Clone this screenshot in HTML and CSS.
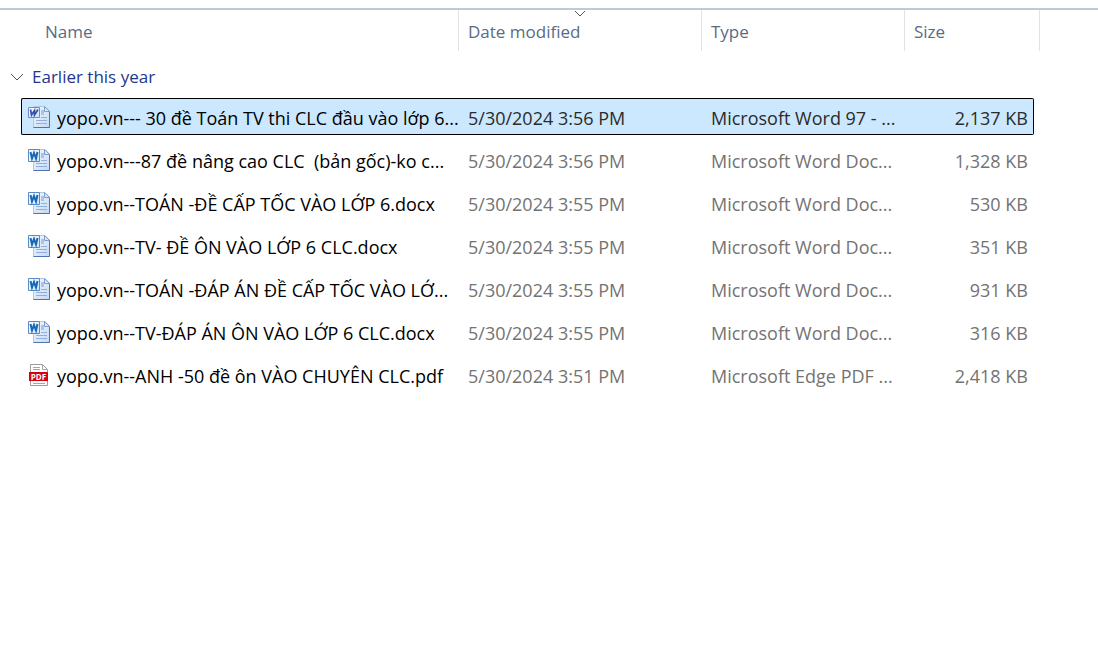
FILE: index.html
```html
<!DOCTYPE html>
<html lang="en">
<head>
<meta charset="utf-8">
<title>Files</title>
<link rel="stylesheet" href="styles.css">
</head>
<body>
<svg class="defs" aria-hidden="true">
  <defs>
    <linearGradient id="page" x1="0" y1="0" x2="1" y2="1"><stop offset="0" stop-color="#f4f9ff"/><stop offset="1" stop-color="#c3d8f4"/></linearGradient>
    <linearGradient id="badge" x1="0" y1="0" x2="1" y2="1"><stop offset="0" stop-color="#fff"/><stop offset="1" stop-color="#c9e2fa"/></linearGradient>
    <symbol id="sheet" viewBox="0 0 24 24">
      <path d="M6.500 1.500H18L22.500 6V22.500H6.500Z" fill="url(#page)" stroke="#b4c8e2"/>
      <path d="M22.500 6V22.500H6.500" fill="none" stroke="#4f74ad"/>
      <path d="M17.500 1.500V6.500H22.500Z" fill="#dce9f8" stroke="#809fca"/>
      <path d="M14 5H17V10H14Z" fill="#a9c4e6"/>
      <path d="M14 12.500H20M9 15.500H20M9 18.500H20" stroke="#91afda"/>
    </symbol>
    <symbol id="docx" viewBox="0 0 24 24">
      <use href="#sheet"/>
      <path d="M1.500 1.500H12.500V13.500H1.500Z" fill="url(#badge)" stroke="#5b8bc4"/>
      <path d="M3.500 4L5 10.500L7 5L9 10.500L10.500 4" fill="none" stroke="#1767b8" stroke-width="2"/>
    </symbol>
    <symbol id="doc" viewBox="0 0 24 24">
      <use href="#sheet"/>
      <path d="M1.500 2.500H12.500V12.500H1.500Z" fill="url(#badge)" stroke="#7188d0"/>
      <path d="M3.500 4.500L4.500 10L7.500 5.500L7.500 10L11 4.500" fill="none" stroke="#334fae" stroke-width="1.700"/>
    </symbol>
    <symbol id="pdf" viewBox="0 0 24 24">
      <path d="M3.500 1.500H15.500L20.500 6.500V22.500H3.500Z" fill="#fff" stroke="#9b9b9b"/>
      <path d="M15.500 1.500V6.500H20.500M6 4.500H13M6 6.500H13M6 20.500H18" fill="none" stroke="#a6a6a6"/>
      <path d="M2 9H21V18H2Z" fill="#d9000d"/>
      <text x="11.500" y="16.500" class="pdf-text">PDF</text>
    </symbol>
  </defs>
</svg>
<main class="view">
  <table class="files">
    <colgroup><col class="c-gutter"><col><col class="c-date"><col class="c-type"><col class="c-size"><col class="c-end"></colgroup>
    <thead>
      <tr>
        <th colspan="2" scope="col"><button class="sort sort-name">Name</button></th>
        <th scope="col"><button class="sort">Date modified<svg class="arrow" viewBox="0 0 12 7"><path d="M1 1L6 6L11 1"/></svg></button></th>
        <th scope="col"><button class="sort">Type</button></th>
        <th colspan="2" scope="col"><button class="sort">Size</button></th>
      </tr>
    </thead>
    <tbody>
      <tr><td colspan="6"><button class="group"><svg class="chevron" viewBox="0 0 14 8"><path d="M1 1L7 7L13 1"/></svg>Earlier this year</button></td></tr>
      <tr class="selected"><td></td><td><div class="cell name"><svg class="icon"><use href="#doc"/></svg>yopo.vn--- 30 đề Toán TV thi CLC đầu vào lớp 6...</div></td><td><div class="cell">5/30/2024 3:56 PM</div></td><td><div class="cell">Microsoft Word 97 - ...</div></td><td><div class="cell size">2,137 KB</div></td><td></td></tr>
      <tr><td></td><td><div class="cell name"><svg class="icon"><use href="#docx"/></svg>yopo.vn---87 đề nâng cao CLC&nbsp; (bản gốc)-ko c...</div></td><td><div class="cell">5/30/2024 3:56 PM</div></td><td><div class="cell">Microsoft Word Doc...</div></td><td><div class="cell size">1,328 KB</div></td><td></td></tr>
      <tr><td></td><td><div class="cell name"><svg class="icon"><use href="#docx"/></svg>yopo.vn--TOÁN -ĐỀ CẤP TỐC VÀO LỚP 6.docx</div></td><td><div class="cell">5/30/2024 3:55 PM</div></td><td><div class="cell">Microsoft Word Doc...</div></td><td><div class="cell size">530 KB</div></td><td></td></tr>
      <tr><td></td><td><div class="cell name"><svg class="icon"><use href="#docx"/></svg>yopo.vn--TV- ĐỀ ÔN VÀO LỚP 6 CLC.docx</div></td><td><div class="cell">5/30/2024 3:55 PM</div></td><td><div class="cell">Microsoft Word Doc...</div></td><td><div class="cell size">351 KB</div></td><td></td></tr>
      <tr><td></td><td><div class="cell name"><svg class="icon"><use href="#docx"/></svg>yopo.vn--TOÁN -ĐÁP ÁN ĐỀ CẤP TỐC VÀO LỚ...</div></td><td><div class="cell">5/30/2024 3:55 PM</div></td><td><div class="cell">Microsoft Word Doc...</div></td><td><div class="cell size">931 KB</div></td><td></td></tr>
      <tr><td></td><td><div class="cell name"><svg class="icon"><use href="#docx"/></svg>yopo.vn--TV-ĐÁP ÁN ÔN VÀO LỚP 6 CLC.docx</div></td><td><div class="cell">5/30/2024 3:55 PM</div></td><td><div class="cell">Microsoft Word Doc...</div></td><td><div class="cell size">316 KB</div></td><td></td></tr>
      <tr><td></td><td><div class="cell name"><svg class="icon"><use href="#pdf"/></svg>yopo.vn--ANH -50 đề ôn VÀO CHUYÊN CLC.pdf</div></td><td><div class="cell">5/30/2024 3:51 PM</div></td><td><div class="cell">Microsoft Edge PDF ...</div></td><td><div class="cell size">2,418 KB</div></td><td></td></tr>
    </tbody>
  </table>
</main>
</body>
</html>
```

FILE: styles.css
```css
* { box-sizing: border-box; }
body {
  margin: 0;
  padding-top: 8px;
  background: #fff;
  color: #737373;
  font: 18px/24px "Open Sans", "Noto Sans", sans-serif;
}
.defs { position: absolute; width: 0; height: 0; }
.view { border-top: 2px solid #bccbda; padding-right: 58px; }
.files { width: 100%; table-layout: fixed; border-collapse: separate; border-spacing: 0; }
.c-gutter { width: 21px; }
.c-date { width: 243px; }
.c-type { width: 203px; }
.c-size { width: 129px; }
.c-end { width: 6px; }
th, td { padding: 0; font-weight: inherit; }
th { border-right: 1px solid #e2e2e2; }
button { border: 0; background: none; font: inherit; text-align: left; }
.sort {
  position: relative;
  display: block;
  width: 100%;
  height: 41px;
  padding: 2px 9px 0;
  color: #5a6b84;
  font-size: 17px;
}
.sort-name { padding-left: 45px; }
.arrow { position: absolute; top: 0; left: 50%; width: 12px; height: 7px; margin-left: -6px; }
.arrow path, .chevron path { fill: none; stroke: #555; }
.group {
  display: flex;
  align-items: center;
  gap: 8px;
  height: 44px;
  padding: 8px 0 0 10px;
  color: #1f3790;
  font-size: 17px;
}
.chevron { width: 14px; height: 8px; }
td { height: 43px; }
.cell {
  display: flex;
  align-items: center;
  height: 37px;
  padding: 2px 0 0 9px;
  border: solid transparent;
  border-width: 1px 0;
  white-space: nowrap;
}
.name { gap: 6px; padding: 2px 0 0 5px; border-left-width: 1px; color: #000; }
.size { justify-content: flex-end; padding: 2px 5px 0 0; border-right-width: 1px; }
.icon { flex: none; width: 24px; height: 24px; margin-bottom: 2px; }
.pdf-text { fill: #fff; font: bold 8px "Open Sans", sans-serif; text-anchor: middle; }
.selected .cell { border-color: #000; background: #cce8ff; color: #2b2b2b; }
.selected .name { border-radius: 2px 0 0 2px; color: #000; }
.selected .size { border-radius: 0 2px 2px 0; }
```
